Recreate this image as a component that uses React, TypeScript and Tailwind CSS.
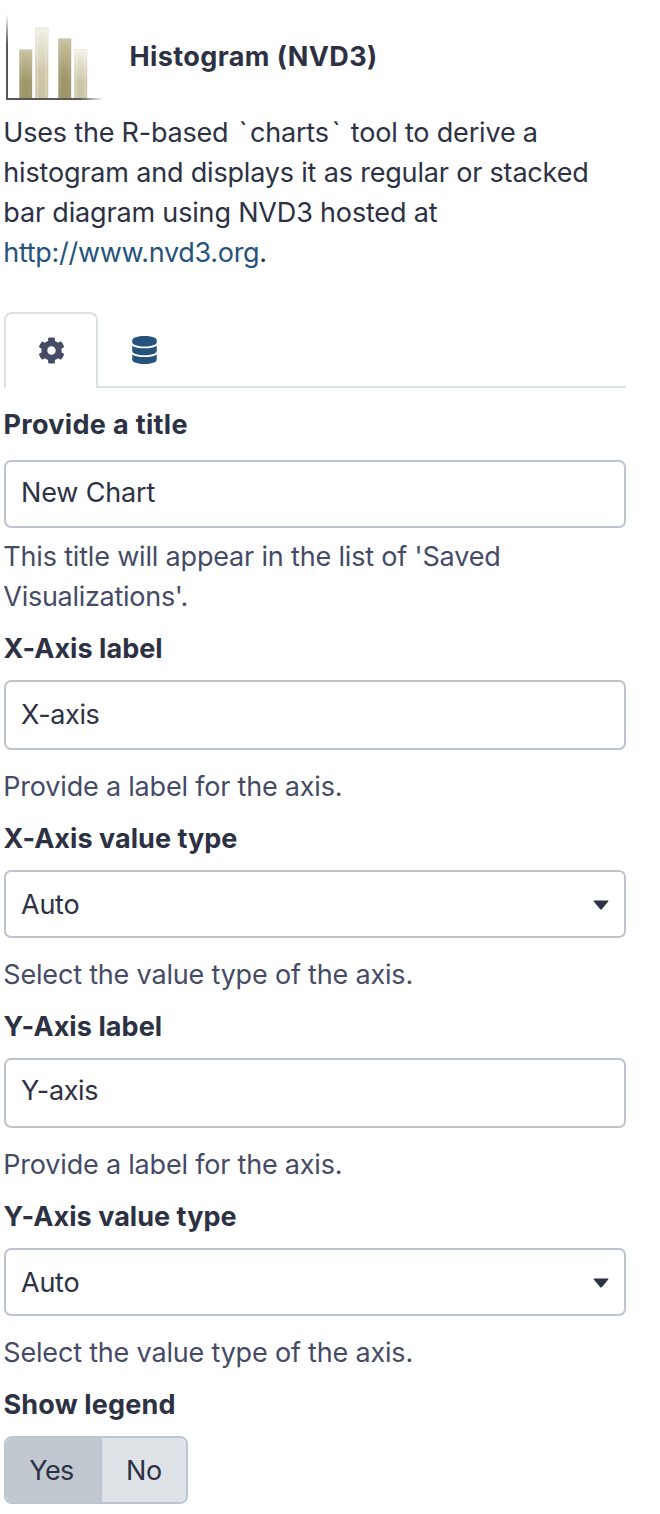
import { FaCog, FaDatabase } from "react-icons/fa";

function HistogramIcon() {
  return (
    <svg width="104" height="100" viewBox="0 0 104 100" className="block shrink-0">
      <defs>
        <linearGradient id="dark" x1="0" y1="0" x2="0" y2="1">
          <stop offset="0" stopColor="#c8c2a0" />
          <stop offset="0.65" stopColor="#a0976a" />
          <stop offset="1" stopColor="#9e9566" />
        </linearGradient>
        <linearGradient id="light" x1="0" y1="0" x2="0" y2="1">
          <stop offset="0" stopColor="#f1f0e7" />
          <stop offset="0.65" stopColor="#cec7a8" />
          <stop offset="1" stopColor="#cbc4a3" />
        </linearGradient>
        <linearGradient id="vertical" x1="0" y1="0" x2="0" y2="1">
          <stop offset="0" stopColor="#58585a" stopOpacity="0" />
          <stop offset="0.35" stopColor="#58585a" />
        </linearGradient>
        <linearGradient id="horizontal" x1="0" y1="0" x2="1" y2="0">
          <stop offset="0.75" stopColor="#58585a" />
          <stop offset="1" stopColor="#58585a" stopOpacity="0" />
        </linearGradient>
      </defs>
      <rect x="19" y="49" width="13.5" height="50" fill="#dddde0" />
      <rect x="19.5" y="50" width="12.5" height="48" fill="url(#dark)" />
      <rect x="35" y="27.5" width="13.5" height="71" fill="#e6e5db" />
      <rect x="35.5" y="28.5" width="12.5" height="70" fill="url(#light)" />
      <rect x="58" y="38" width="13.5" height="61" fill="#dddde0" />
      <rect x="58.5" y="39" width="12.5" height="59" fill="url(#dark)" />
      <rect x="74" y="49" width="13.5" height="50" fill="#ebeae3" />
      <rect x="74.5" y="50" width="12.5" height="48" fill="url(#light)" />
      <g fill="none" stroke="#fff" strokeOpacity="0.12">
        <path d="M21.5 98V51.5H30V98M60.5 98V40.5H69V98" />
      </g>
      <g fill="none" stroke="#fff" strokeOpacity="0.35">
        <path d="M37.5 98V30H46V98M76.5 98V51.5H85V98" />
      </g>
      <rect x="6" y="14" width="2" height="86" fill="url(#vertical)" />
      <rect x="6" y="98" width="98" height="2" fill="url(#horizontal)" />
    </svg>
  );
}

function Caret() {
  return (
    <svg width="16" height="10" viewBox="0 0 16 10" className="mb-px block">
      <path d="M1.2.5h13.6q1.4 0 .4 1.1L9 8.9q-1 1-2 0L.8 1.6Q-.2.5 1.2.5Z" fill="#2c3143" />
    </svg>
  );
}

const label = "-ml-[0.5px] h-10 leading-[42px] font-bold";
const help = "-ml-[0.7px] h-10 leading-[42px] text-[#454b66]";
const control = "flex items-center rounded-[7px] border-2 border-[#bdc3d0] pl-[15px] pr-[15px]";

export default function App() {
  return (
    <main className="h-[1514px] w-[660px] overflow-hidden bg-white pr-[34px] pl-1 font-['Inter',sans-serif] text-[27px] whitespace-nowrap text-[#2c3143]">
      <header className="-ml-1 flex h-[112px] items-start">
        <HistogramIcon />
        <h1 className="mt-[37px] ml-[25.5px] leading-10 font-bold tracking-[0.4px]">Histogram (NVD3)</h1>
      </header>
      <p className="-ml-[0.7px] h-[200px] pt-px leading-10 tracking-[-0.18px]">
        <span className="tracking-[-0.2px]">Uses the R-based </span>
        <span className="pr-[2.5px] pl-[3px]">`</span>charts<span className="px-[3px]">`</span> tool to derive a<br />
        histogram and displays it as regular or stacked<br />
        <span className="tracking-[-0.17px]">bar diagram using NVD3 hosted at</span><br />
        <span className="tracking-[-0.31px]"><a className="text-[#25537b]">http://www.nvd3.org</a>.</span>
      </p>
      <nav className="flex h-[76px]">
        <div className="flex w-[94px] items-center justify-center rounded-t-[8px] border-2 border-b-0 border-[#dbe0e5] pb-[2px] text-[#454b66]">
          <FaCog size={27} />
        </div>
        <div className="flex flex-1 items-center border-b-2 border-[#dbe0e5] pt-px pl-[34px] text-[#25537b]">
          <FaDatabase className="h-[28px] w-[25px]" />
        </div>
      </nav>
      <form>
        <div className={`${label} mt-4 tracking-[0.32px]`}>Provide a title</div>
        <div className={`${control} mt-4 h-[68px] pb-[2px] tracking-[-0.15px]`}>New Chart</div>
        <div className="mt-2 -ml-[0.7px] h-20 pt-px leading-10 tracking-[-0.18px] text-[#454b66]">
          This title will appear in the list of 'Saved<br />
          <span className="tracking-[-0.28px]">Visualizations'.</span>
        </div>
        <div className={`${label} mt-3 tracking-[0.05px]`}>X-Axis label</div>
        <div className={`${control} mt-3 h-[70px] tracking-[-0.35px]`}>X-axis</div>
        <div className={`${help} mt-4 tracking-[-0.2px]`}>Provide a label for the axis.</div>
        <div className={`${label} mt-3 tracking-[0.04px]`}>X-Axis value type</div>
        <div className={`${control} mt-3 h-[68px] justify-between pt-[2px] tracking-[-0.25px]`}>Auto<Caret /></div>
        <div className={`${help} mt-4 tracking-[-0.19px]`}>Select the value type of the axis.</div>
        <div className={`${label} mt-3 tracking-[0.08px]`}>Y-Axis label</div>
        <div className={`${control} mt-3 h-[70px] pb-1 tracking-[-0.35px]`}>Y-axis</div>
        <div className={`${help} mt-4 tracking-[-0.2px]`}>Provide a label for the axis.</div>
        <div className={`${label} mt-3 tracking-[0.04px]`}>Y-Axis value type</div>
        <div className={`${control} mt-3 h-[68px] justify-between pt-[2px] tracking-[-0.25px]`}>Auto<Caret /></div>
        <div className={`${help} mt-4 tracking-[-0.19px]`}>Select the value type of the axis.</div>
        <div className={`${label} mt-3 tracking-[0.15px]`}>Show legend</div>
        <div className="mt-3 flex h-[68px] w-[184px] overflow-hidden rounded-[8px] border-2 border-[#bdc6d0]">
          <div className="flex w-[96px] items-center justify-center border-r-[3px] border-[#bdc6d0] bg-[#c1c8cf] pt-[2px] pr-[2px] tracking-[-0.5px]">Yes</div>
          <div className="flex flex-1 items-center justify-center bg-[#dee2e6] pt-[2px] tracking-[-0.3px]">No</div>
        </div>
      </form>
    </main>
  );
}
